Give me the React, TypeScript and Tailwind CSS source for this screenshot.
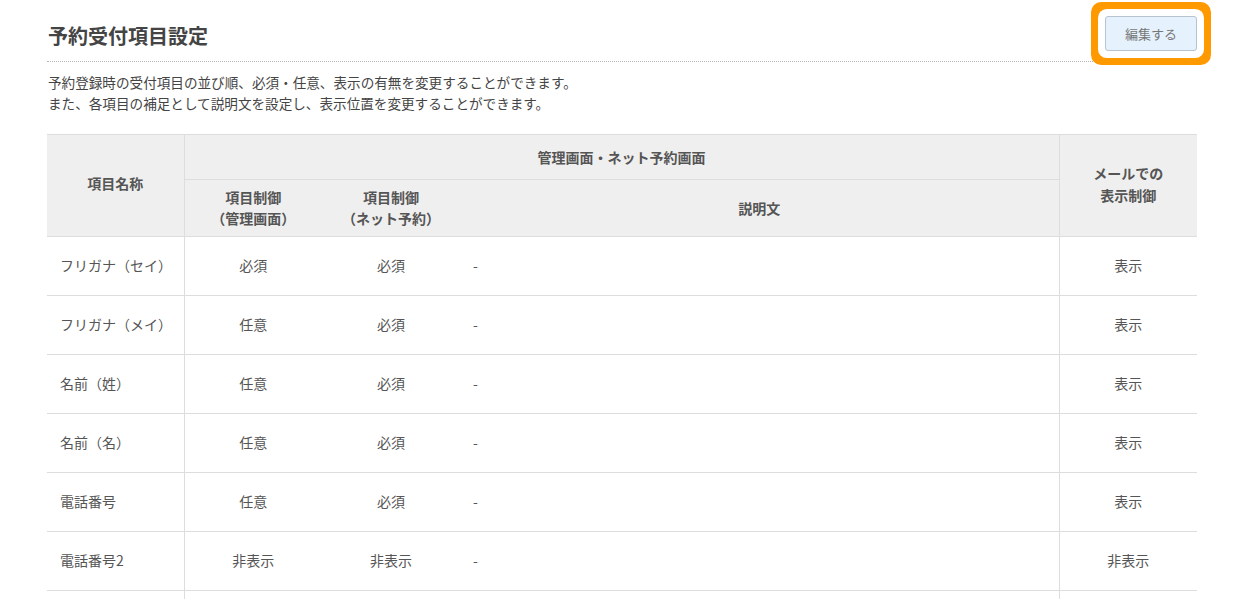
const rows = [
  { name: "フリガナ（セイ）", admin: "必須", net: "必須", desc: "-", mail: "表示" },
  { name: "フリガナ（メイ）", admin: "任意", net: "必須", desc: "-", mail: "表示" },
  { name: "名前（姓）", admin: "任意", net: "必須", desc: "-", mail: "表示" },
  { name: "名前（名）", admin: "任意", net: "必須", desc: "-", mail: "表示" },
  { name: "電話番号", admin: "任意", net: "必須", desc: "-", mail: "表示" },
  { name: "電話番号2", admin: "非表示", net: "非表示", desc: "-", mail: "非表示" },
  { name: "メールアドレス", admin: "任意", net: "必須", desc: "-", mail: "表示" },
];

export default function App() {
  return (
    <main
      className="min-h-screen bg-white pl-[47px] pr-[55px] pt-[16px] text-[14px] text-[#444]"
      style={{ fontFamily: '"Noto Sans CJK JP", "Noto Sans", sans-serif' }}
    >
      {/* 見出しと編集ボタン */}
      <div className="flex items-center justify-between border-b border-dotted border-[#b5b5b5] pb-[10px] pl-px">
        <h1 className="mt-[4px] text-[20px] font-bold leading-none text-[#444]">予約受付項目設定</h1>
        <button className="h-[35px] w-[92px] rounded-[3px] border border-[#b7c3ce] bg-[#e5f2fd] text-[13px] text-[#777] ring-[7px] ring-[#ff9900] ring-offset-[7px] ring-offset-white">
          編集する
        </button>
      </div>

      <div className="mt-[10px] pl-px text-[13.6px] leading-[21px]">
        <p>予約登録時の受付項目の並び順、必須・任意、表示の有無を変更することができます。</p>
        <p>また、各項目の補足として説明文を設定し、表示位置を変更することができます。</p>
      </div>

      <table className="mt-[20px] w-full table-fixed border-collapse text-[#555]">
        <colgroup>
          <col className="w-[137px]" />
          <col className="w-[138px]" />
          <col className="w-[138px]" />
          <col />
          <col className="w-[138px]" />
        </colgroup>
        <thead className="bg-[#efefef] font-bold">
          <tr className="h-[45px] border-t border-[#dddddd]">
            <th rowSpan={2} className="border-r border-b border-[#dddddd] pb-[4px] align-middle">
              項目名称
            </th>
            <th colSpan={3} className="border-b border-[#dddddd] align-middle">
              管理画面・ネット予約画面
            </th>
            <th rowSpan={2} className="border-l border-b border-[#dddddd] pb-[4px] leading-[22px] align-middle">
              メールでの
              <br />
              表示制御
            </th>
          </tr>
          <tr className="h-[57px] border-b border-[#dddddd] leading-[21px]">
            <th className="align-middle">
              項目制御
              <br />
              （管理画面）
            </th>
            <th className="align-middle">
              項目制御
              <br />
              （ネット予約）
            </th>
            <th className="align-middle">説明文</th>
          </tr>
        </thead>
        <tbody>
          {rows.map((r) => (
            <tr key={r.name} className="h-[59px] border-b border-[#dddddd]">
              <td className="border-r border-[#dddddd] pb-[2px] pl-[13px]">{r.name}</td>
              <td className="pb-[2px] text-center">{r.admin}</td>
              <td className="pb-[2px] text-center">{r.net}</td>
              <td className="pb-[2px] pl-[13px]">{r.desc}</td>
              <td className="border-l border-[#dddddd] pb-[2px] text-center">{r.mail}</td>
            </tr>
          ))}
        </tbody>
      </table>
    </main>
  );
}
